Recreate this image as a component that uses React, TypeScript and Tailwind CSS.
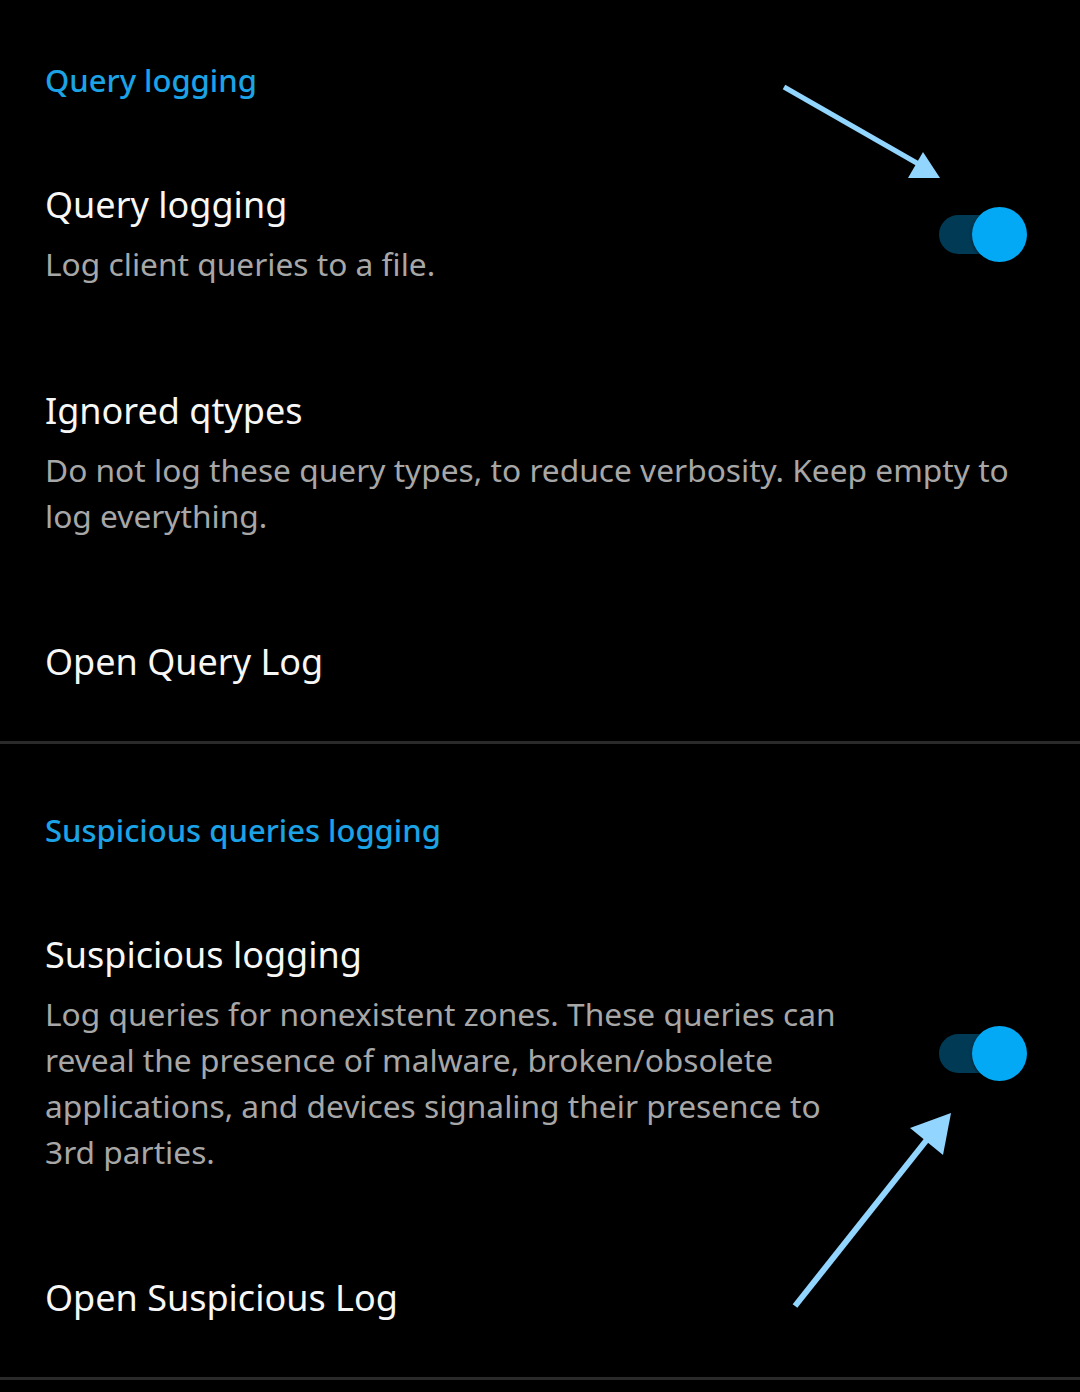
import React from "react";

const font = { fontFamily: '"Noto Sans", "Open Sans", sans-serif' };

function Toggle() {
  return (
    <div className="relative w-[88px] h-[55px] shrink-0">
      <div className="absolute left-0 top-[8px] w-[80px] h-[39px] rounded-full bg-[#003a55]" />
      <div className="absolute right-0 top-0 w-[55px] h-[55px] rounded-full bg-[#03a9f4] shadow-[0_1px_3px_rgba(0,0,0,0.6)]" />
    </div>
  );
}

function Category({ children, top }: { children: React.ReactNode; top: string }) {
  return (
    <div className={`${top} px-[45px] text-[31px] leading-[40px] font-medium text-[#1ba3e6]`}>
      {children}
    </div>
  );
}

function Row({
  title,
  subtitle,
  toggle,
  className,
}: {
  title: string;
  subtitle?: React.ReactNode;
  toggle?: boolean;
  className: string;
}) {
  return (
    <div className={`${className} flex items-center pl-[45px] pr-[53px]`}>
      <div className="flex-1 min-w-0">
        <div className="text-[36px] leading-[48px] text-[#f7f7f7]">{title}</div>
        {subtitle && (
          <div className="mt-[12px] text-[31.7px] leading-[46px] text-[#a7a7a7]">{subtitle}</div>
        )}
      </div>
      {toggle && <Toggle />}
    </div>
  );
}

export default function App() {
  return (
    <div className="relative w-[1080px] h-[1392px] bg-black overflow-hidden" style={font}>
      <Category top="pt-[60px]">Query logging</Category>
      <Row className="mt-[81px]" title="Query logging" subtitle="Log client queries to a file." toggle />
      <Row
        className="mt-[100px]"
        title="Ignored qtypes"
        subtitle="Do not log these query types, to reduce verbosity. Keep empty to log everything."
      />
      <Row className="mt-[99px]" title="Open Query Log" />
      <div className="mt-[55px] h-[3px] bg-[#2a2a2a]" />

      <Category top="mt-[66px]">Suspicious queries logging</Category>
      <Row
        className="mt-[81px]"
        title="Suspicious logging"
        subtitle={
          <>
            Log queries for nonexistent zones. These queries can
            <br />
            reveal the presence of malware, broken/obsolete
            <br />
            applications, and devices signaling their presence to
            <br />
            3rd parties.
          </>
        }
        toggle
      />
      <Row className="mt-[99px]" title="Open Suspicious Log" />
      <div className="mt-[55px] h-[3px] bg-[#2a2a2a]" />

      {/* annotation arrows */}
      <svg className="absolute inset-0 pointer-events-none" width="1080" height="1392">
        <g fill="#92d5ff" stroke="#92d5ff">
          <line x1="784" y1="87" x2="922" y2="166" strokeWidth="5" />
          <polygon points="908,178 940,178 923,152" stroke="none" />
          <line x1="795" y1="1306" x2="933" y2="1132" strokeWidth="6" />
          <polygon points="910,1128 951,1113 943,1155" stroke="none" />
        </g>
      </svg>
    </div>
  );
}
